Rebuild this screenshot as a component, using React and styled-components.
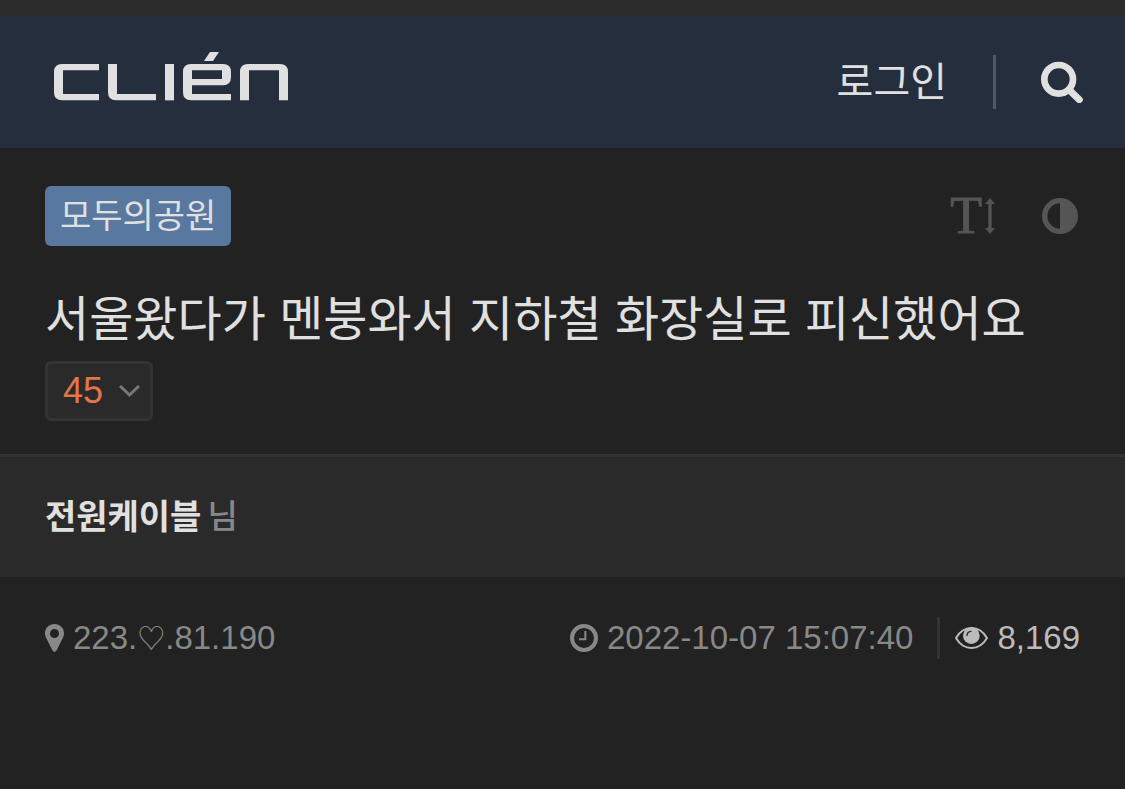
import React from "react";
import styled, { createGlobalStyle } from "styled-components";

const GlobalStyle = createGlobalStyle`
  *, *::before, *::after { box-sizing: border-box; }
  body {
    margin: 0;
    background: #222222;
    color: #e0e0e0;
    font-family: "Liberation Sans", "Noto Sans CJK KR", sans-serif;
  }
  a { color: inherit; text-decoration: none; }
  svg { display: block; flex: none; }
`;

const TopStrip = styled.div`
  height: 15px;
  background: #2c2c2c;
`;

const Header = styled.header`
  display: flex;
  align-items: center;
  justify-content: space-between;
  min-height: 133px;
  padding: 0 42px 0 54px;
  background: #252e3d;
`;

const LogoLink = styled.a`
  display: block;
  padding-bottom: 10px;
`;

const HeaderNav = styled.nav`
  display: flex;
  align-items: center;
`;

const LoginLink = styled.a`
  font-size: 40px;
  line-height: 54px;
`;

const Divider = styled.span`
  width: 3px;
  height: ${(p) => p.$height}px;
  background: ${(p) => p.$color};
  margin: ${(p) => p.$margin};
`;

const IconButton = styled.button`
  display: flex;
  align-items: center;
  gap: 3px;
  padding: 0;
  border: 0;
  background: none;
  color: ${(p) => p.$color};
  cursor: pointer;
`;

const PostHead = styled.section`
  padding: 38px 45px 33px;
  border-bottom: 3px solid #333333;
`;

const HeadRow = styled.div`
  display: flex;
  align-items: center;
  justify-content: space-between;
`;

const BoardLink = styled.a`
  padding: 0 15px;
  border-radius: 6px;
  background: #5878a0;
  font-size: 34px;
  line-height: 60px;
`;

const Tools = styled.div`
  display: flex;
  align-items: center;
  gap: 47px;
  padding-right: 2px;
`;

const LetterIcon = styled.span`
  font-family: "Liberation Serif", serif;
  font-size: 52px;
  line-height: 48px;
  -webkit-text-stroke: 1px currentColor;
`;

const Title = styled.h1`
  margin: 38px 0 5px;
  font-size: 48px;
  font-weight: 400;
  line-height: 72px;
`;

const CountButton = styled.button`
  display: flex;
  align-items: center;
  gap: 16px;
  height: 60px;
  padding: 0 10px 0 15px;
  border: 3px solid #333333;
  border-radius: 6px;
  background: #2a2a2a;
  color: #e0764a;
  font-family: inherit;
  font-size: 36px;
  cursor: pointer;
`;

const AuthorBar = styled.section`
  display: flex;
  align-items: center;
  gap: 6px;
  min-height: 120px;
  padding: 0 45px;
  background: #2a2a2a;
  font-size: 34px;
  line-height: 48px;
`;

const AuthorName = styled.a`
  font-weight: 700;
`;

const Suffix = styled.span`
  color: #888888;
  font-size: 33px;
  font-weight: 500;
`;

const MetaBar = styled.section`
  display: flex;
  flex-wrap: wrap;
  align-items: center;
  justify-content: space-between;
  padding: 39px 45px;
  color: #888888;
  font-size: 33px;
  line-height: 44px;
`;

const MetaGroup = styled.div`
  display: flex;
  align-items: center;
`;

const MetaItem = styled.span`
  display: flex;
  align-items: center;
  gap: 9px;
  color: ${(p) => p.$color || "inherit"};
`;

const Heart = styled.span`
  font-size: 28px;
  line-height: 1;
`;

const Logo = () => (
  <svg width="234" height="49" viewBox="42 36 702 147" fill="#e0e0e0" role="img" aria-label="CLIEN">
    <path d="M177 72H66Q42 72 42 96V157Q42 181 66 181H177V162H69V91H177Z" />
    <path d="M204 72H231V162H348V181H228Q204 181 204 157Z" />
    <path d="M375 72H402V181H375Z" />
    <path
      fillRule="evenodd"
      d="M573 181H453Q429 181 429 157V96Q429 72 453 72H549Q573 72 573 96V112Q573 136 549 136H456V162H573ZM456 91V117H546V91Z"
    />
    <path d="M510 36H537L519 63H492Z" />
    <path d="M600 181V96Q600 72 624 72H720Q744 72 744 96V181H717V91H627V181Z" />
  </svg>
);

const SearchIcon = () => (
  <svg width="42" height="42" viewBox="0 0 126 126" fill="none" stroke="currentColor" strokeWidth="20">
    <circle cx="53" cy="55" r="43" />
    <path d="M85 87L115 116" strokeWidth="21" strokeLinecap="round" />
  </svg>
);

const HeightArrow = () => (
  <svg width="10" height="36" viewBox="0 0 30 108" fill="currentColor">
    <path d="M15 0L30 18H20V90H30L15 108L0 90H10V18H0Z" />
  </svg>
);

const ContrastIcon = () => (
  <svg width="36" height="36" viewBox="0 0 108 108">
    <circle cx="54" cy="54" r="46" fill="none" stroke="currentColor" strokeWidth="16" />
    <path d="M54 8A46 46 0 0 1 54 100Z" fill="currentColor" />
  </svg>
);

const ChevronIcon = () => (
  <svg width="21" height="13" viewBox="0 0 21 13" fill="none" stroke="#777777" strokeWidth="3">
    <path d="M1 1L10.500 10L20 1" />
  </svg>
);

const PinIcon = () => (
  <svg width="19" height="28" viewBox="0 0 57 84" fill="currentColor">
    <path
      fillRule="evenodd"
      d="M28.500 0C12 0 0 12 0 28C0 37 4 43 7 49L22 79Q28.500 88 35 79L50 49C53 43 57 37 57 28C57 12 45 0 28.500 0ZM28.500 15A13.500 13.500 0 1 1 28.500 42A13.500 13.500 0 1 1 28.500 15Z"
    />
  </svg>
);

const ClockIcon = () => (
  <svg width="28" height="28" viewBox="0 0 84 84" fill="none" stroke="currentColor">
    <circle cx="42" cy="42" r="36" strokeWidth="12" />
    <path d="M46 21V46H27" strokeWidth="6" />
  </svg>
);

const EyeIcon = () => (
  <svg width="33" height="22" viewBox="0 0 99 66" fill="none" stroke="currentColor">
    <path d="M3 33C26 -7 73 -7 96 33C73 73 26 73 3 33Z" strokeWidth="6" />
    <circle cx="49" cy="26" r="25" fill="currentColor" stroke="none" />
    <path d="M36 25Q37 14 48 13" stroke="#222222" strokeWidth="4" strokeLinecap="round" />
  </svg>
);

export default function App() {
  return (
    <>
      <GlobalStyle />
      <TopStrip />
      <Header>
        <LogoLink href="#">
          <Logo />
        </LogoLink>
        <HeaderNav>
          <LoginLink href="#login">로그인</LoginLink>
          <Divider $height={54} $color="#505864" $margin="0 45px 0 46px" />
          <IconButton type="button" aria-label="검색" $color="#e0e0e0">
            <SearchIcon />
          </IconButton>
        </HeaderNav>
      </Header>
      <main>
        <PostHead>
          <HeadRow>
            <BoardLink href="#park">모두의공원</BoardLink>
            <Tools>
              <IconButton type="button" aria-label="글자 크기" $color="#555555">
                <LetterIcon>T</LetterIcon>
                <HeightArrow />
              </IconButton>
              <IconButton type="button" aria-label="화면 모드" $color="#555555">
                <ContrastIcon />
              </IconButton>
            </Tools>
          </HeadRow>
          <Title>서울왔다가 멘붕와서 지하철 화장실로 피신했어요</Title>
          <CountButton type="button">
            45
            <ChevronIcon />
          </CountButton>
        </PostHead>
        <AuthorBar>
          <AuthorName href="#author">전원케이블</AuthorName>
          <Suffix>님</Suffix>
        </AuthorBar>
        <MetaBar>
          <MetaItem>
            <PinIcon />
            <span>
              223.<Heart>♡</Heart>.81.190
            </span>
          </MetaItem>
          <MetaGroup>
            <MetaItem>
              <ClockIcon />
              <time dateTime="2022-10-07T15:07:40">2022-10-07 15:07:40</time>
            </MetaItem>
            <Divider $height={42} $color="#333333" $margin="0 15px 0 24px" />
            <MetaItem $color="#bbbbbb">
              <EyeIcon />
              <span>8,169</span>
            </MetaItem>
          </MetaGroup>
        </MetaBar>
      </main>
    </>
  );
}
